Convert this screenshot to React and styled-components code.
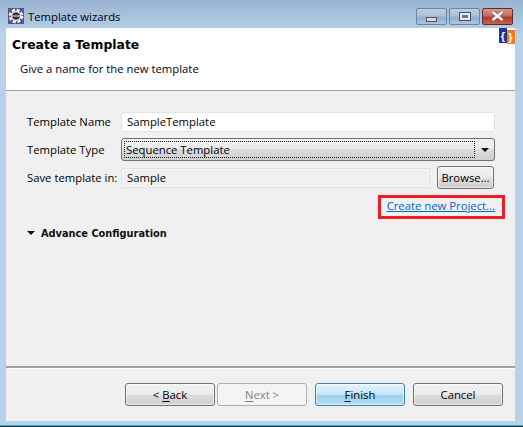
import React from 'react';
import styled, { createGlobalStyle } from 'styled-components';

const Global = createGlobalStyle`
  html, body { margin: 0; padding: 0; background: #b9d1ea; }
  #root { width: 523px; height: 427px; overflow: hidden; }
`;
const UI = `"Open Sans", "Noto Sans", sans-serif`;

const Win = styled.div`
  width: 523px; height: 427px; box-sizing: border-box;
  display: flex; flex-direction: column;
  font: 11.3px ${UI}; color: #000; white-space: nowrap;
  background: linear-gradient(180deg, #99b4d1 0, #b9d1ea 34px);
  border-bottom: 1px solid #12404c;
  box-shadow: inset 0 -1px 0 #36a9c4;
`;
const TitleBar = styled.div`
  height: 28px; flex: none; display: flex; align-items: center;
  padding: 4px 10px 0 8px; box-sizing: border-box;
`;
const TitleText = styled.span`
  margin-left: 4px; font-size: 11.3px; color: #000; flex: 1;
`;
const Ctl = styled.div`
  width: 31px; height: 17px; margin-left: 2px; box-sizing: border-box;
  border: 1px solid ${p => p.$close ? '#5a2a30' : '#71839b'}; border-radius: 2px;
  display: flex; align-items: center; justify-content: center;
  background: ${p => p.$close
    ? 'linear-gradient(180deg,#d9958c 0,#c8695e 45%,#b5382c 55%,#c9604f 100%)'
    : 'linear-gradient(180deg,#bdd0e4 0,#a8c1da 45%,#90aecd 55%,#a9c4dd 100%)'};
`;
const MinGlyph = styled.svg`
  margin-top: 6px;
`;
const Controls = styled.div`
  display: flex;
`;
const Client = styled.div`
  flex: 1; margin: 0 8px 5px 6px; background: #f0f0f0;
  display: flex; flex-direction: column; min-height: 0;
`;
const Header = styled.div`
  height: 63px; flex: none; background: #fff; box-sizing: border-box;
  border-bottom: 1px solid #a0a0a0; padding: 8px 6px 0 6px; position: relative;
`;
const Heading = styled.div`
  font: bold 12.4px "DejaVu Sans", sans-serif; color: #000; line-height: 18px;
`;
const Sub = styled.div`
  margin: 7px 0 0 8px; line-height: 16px; color: #000020;
`;
const Logo = styled.svg`
  position: absolute; top: 0; right: 0; width: 16px; height: 16px;
`;
const Body = styled.div`
  flex: 1; padding: 21px 0 0 21px; display: flex; flex-direction: column; min-height: 0;
  border-bottom: 2px solid #a0a0a0; box-shadow: 0 1px 0 #fff;
`;
const Row = styled.div`
  display: flex; align-items: center; height: ${p => p.$h}px; margin-top: ${p => p.$t || 0}px;
`;
const Label = styled.div`
  width: 94px; flex: none; line-height: 16px;
`;
const Field = styled.div`
  height: 20px; box-sizing: border-box; width: ${p => p.$w}px;
  border: 1px solid ${p => p.$ro ? '#e2e2e2' : '#dde4ec'}; border-radius: 2px;
  background: ${p => p.$ro ? '#f0f0f0' : '#fff'};
  box-shadow: ${p => p.$ro ? 'inset 0 0 0 1px #f8f8f8' : 'none'};
  padding-left: 5px; line-height: 18px; color: #000;
`;
const Combo = styled.div`
  width: 374px; height: 23px; box-sizing: border-box;
  border: 1px solid #707070; border-radius: 3px; display: flex; align-items: stretch;
  background: linear-gradient(180deg,#f2f2f2 0,#ebebeb 45%,#dddddd 50%,#cfcfcf 100%);
`;
const ComboText = styled.div`
  flex: 1; margin: 2px 0 2px 2px; border: 1px dotted #111; line-height: 15px;
  padding-left: 1px;
`;
const ComboArrow = styled.div`
  width: 19px; display: flex; align-items: center; justify-content: center;
`;
const Tri = styled.div`
  width: 0; height: 0; border-left: 4px solid transparent; border-right: 4px solid transparent;
  border-top: 4px solid #111;
`;
const Btn = styled.div`
  width: ${p => p.$w || 90}px; height: 23px; box-sizing: border-box;
  border-radius: 3px; display: flex; align-items: center; justify-content: center;
  border: 1px solid ${p => p.$off ? '#adb2b5' : p.$def ? '#3c7fb1' : '#707070'};
  color: ${p => p.$off ? '#838383' : '#000'};
  background: ${p => p.$off ? '#f4f4f4'
    : p.$def ? 'linear-gradient(180deg,#e5f4fc 0,#c4e5f6 50%,#98d1ef 50%,#b8def4 100%)'
    : 'linear-gradient(180deg,#f2f2f2 0,#ebebeb 50%,#dddddd 50%,#cfcfcf 100%)'};
  box-shadow: ${p => p.$off ? 'none' : 'inset 0 0 0 1px rgba(255,255,255,.55)'};
  u { text-underline-offset: 2px; }
`;
const LinkBox = styled.div`
  align-self: flex-end; margin: 6px 10px 0 0; border: 3px solid #ee1c25;
  width: 127px; height: 24px; box-sizing: border-box; text-align: right; padding-right: 7px;
`;
const Link = styled.a`
  color: #0066cc; text-decoration: underline; line-height: 16px; display: block;
`;
const Section = styled.div`
  display: flex; align-items: center; margin-top: 7px; height: 14px;
`;
const SectionTri = styled(Tri)`
  margin-right: 6px;
`;
const SectionText = styled.div`
  font: bold 9.8px "DejaVu Sans", sans-serif; color: #111;
`;
const Footer = styled.div`
  height: 53px; flex: none; display: flex; padding: 15px 0 0 119px; box-sizing: border-box;
`;
const Gap = styled.div` width: ${p => p.$w}px; flex: none; `;

export default function App() {
  return (
    <Win>
      <Global />
      <TitleBar>
        <svg width="16" height="16" viewBox="0 0 16 16">
          <rect width="16" height="16" fill="#5b5288" />
          <circle cx="8" cy="8" r="6" fill="none" stroke="#f0f0f4" strokeWidth="2.6" strokeDasharray="3 1.7" />
          <circle cx="8" cy="8" r="5" fill="#f0f0f4" />
          <circle cx="8" cy="8" r="3.8" fill="#35333f" />
          <rect x="4.4" y="7.2" width="7.2" height="1.6" fill="#a9a9b8" />
        </svg>
        <TitleText>Template wizards</TitleText>
        <Controls>
          <Ctl><MinGlyph width="11" height="5"><rect x=".5" y=".5" width="10" height="4" fill="#d9d9d9" stroke="#555" /></MinGlyph></Ctl>
          <Ctl><svg width="12" height="9"><rect x=".5" y=".5" width="11" height="8" fill="#e8ecf2" stroke="#444c5a" /><rect x="3" y="3" width="6" height="3" fill="#66768c" /></svg></Ctl>
          <Ctl $close><svg width="15" height="10" viewBox="0 0 15 10"><path d="M2.5 1 L12.5 9 M12.5 1 L2.5 9" stroke="#6a4a4c" strokeWidth="4" /><path d="M2.5 1 L12.5 9 M12.5 1 L2.5 9" stroke="#f2f2f2" strokeWidth="2.8" /></svg></Ctl>
        </Controls>
      </TitleBar>
      <Client>
        <Header>
          <Heading>Create a Template</Heading>
          <Sub>Give a name for the new template</Sub>
          <Logo viewBox="0 0 16 16">
            <rect width="8" height="15" fill="#28328c" />
            <rect x="8" y="2" width="8" height="14" fill="#f47b20" />
            <text x="4" y="11.5" textAnchor="middle" fontSize="11" fontWeight="bold" fill="#fff" fontFamily="Liberation Sans">{'{'}</text>
            <text x="11.5" y="13" textAnchor="middle" fontSize="11" fontWeight="bold" fill="#fff" fontFamily="Liberation Sans">{'}'}</text>
          </Logo>
        </Header>
        <Body>
          <Row $h={20}>
            <Label>Template Name</Label>
            <Field $w={374}>SampleTemplate</Field>
          </Row>
          <Row $h={23} $t={6}>
            <Label>Template Type</Label>
            <Combo>
              <ComboText>Sequence Template</ComboText>
              <ComboArrow><Tri /></ComboArrow>
            </Combo>
          </Row>
          <Row $h={23} $t={5}>
            <Label>Save template in:</Label>
            <Field $w={309} $ro>Sample</Field>
            <Gap $w={7} />
            <Btn $w={57}>Browse...</Btn>
          </Row>
          <LinkBox><Link>Create new Project...</Link></LinkBox>
          <Section>
            <SectionTri />
            <SectionText>Advance Configuration</SectionText>
          </Section>
        </Body>
        <Footer>
          <Btn>&lt;&nbsp;<u>B</u>ack</Btn>
          <Gap $w={2} />
          <Btn $off><u>N</u>ext &gt;</Btn>
          <Gap $w={8} />
          <Btn $def><u>F</u>inish</Btn>
          <Gap $w={8} />
          <Btn>Cancel</Btn>
        </Footer>
      </Client>
    </Win>
  );
}
